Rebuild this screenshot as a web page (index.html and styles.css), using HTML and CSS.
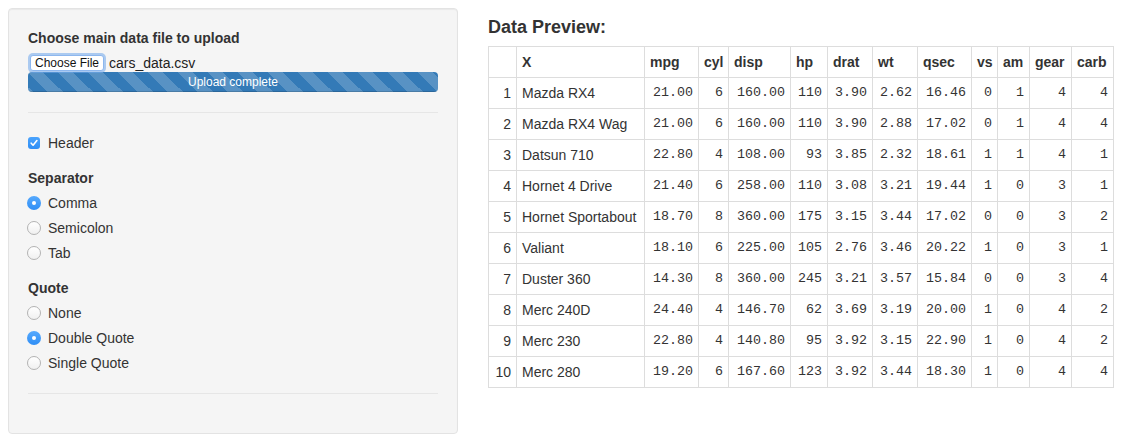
FILE: index.html
```html
<!DOCTYPE html>
<html>
<head>
<meta charset="utf-8">
<link rel="stylesheet" href="styles.css">
</head>
<body>
<div class="layout">
  <aside class="well">
    <div class="form-group">
      <div class="control-label">Choose main data file to upload</div>
      <div class="file-row">
        <span class="file-btn">Choose File</span>
        <span class="file-name">cars_data.csv</span>
      </div>
      <div class="progress"><div class="progress-bar">Upload complete</div></div>
    </div>
    <hr class="rule">
    <div class="form-group">
      <div class="check-row">
        <span class="checkbox-box"><svg width="12" height="12" viewBox="0 0 12 12"><path d="M3.2 6.2 L5.1 8.2 L8.9 3.6" fill="none" stroke="#fff" stroke-width="1.6" stroke-linecap="round" stroke-linejoin="round"/></svg></span>
        <span>Header</span>
      </div>
    </div>
    <div class="form-group">
      <div class="control-label">Separator</div>
      <div class="radio-list">
        <div class="radio-row"><span class="radio-dot on"></span><span>Comma</span></div>
        <div class="radio-row"><span class="radio-dot"></span><span>Semicolon</span></div>
        <div class="radio-row"><span class="radio-dot"></span><span>Tab</span></div>
      </div>
    </div>
    <div class="form-group">
      <div class="control-label">Quote</div>
      <div class="radio-list">
        <div class="radio-row"><span class="radio-dot"></span><span>None</span></div>
        <div class="radio-row"><span class="radio-dot on"></span><span>Double Quote</span></div>
        <div class="radio-row"><span class="radio-dot"></span><span>Single Quote</span></div>
      </div>
    </div>
    <hr class="rule">
  </aside>
  <main class="main">
    <h4 class="title">Data Preview:</h4>
    <table class="data-table">
      <colgroup>
        <col class="w28"><col class="w128"><col class="w54"><col class="w30"><col class="w62"><col class="w37"><col class="w45"><col class="w45"><col class="w54"><col class="w26"><col class="w32"><col class="w42"><col class="w42">
      </colgroup>
      <thead>
        <tr><th></th><th>X</th><th>mpg</th><th>cyl</th><th>disp</th><th>hp</th><th>drat</th><th>wt</th><th>qsec</th><th>vs</th><th>am</th><th>gear</th><th>carb</th></tr>
      </thead>
      <tbody>
        <tr><td class="idx">1</td><td>Mazda RX4</td><td class="n">21.00</td><td class="n">6</td><td class="n">160.00</td><td class="n">110</td><td class="n">3.90</td><td class="n">2.62</td><td class="n">16.46</td><td class="n">0</td><td class="n">1</td><td class="n">4</td><td class="n">4</td></tr>
        <tr><td class="idx">2</td><td>Mazda RX4 Wag</td><td class="n">21.00</td><td class="n">6</td><td class="n">160.00</td><td class="n">110</td><td class="n">3.90</td><td class="n">2.88</td><td class="n">17.02</td><td class="n">0</td><td class="n">1</td><td class="n">4</td><td class="n">4</td></tr>
        <tr><td class="idx">3</td><td>Datsun 710</td><td class="n">22.80</td><td class="n">4</td><td class="n">108.00</td><td class="n">93</td><td class="n">3.85</td><td class="n">2.32</td><td class="n">18.61</td><td class="n">1</td><td class="n">1</td><td class="n">4</td><td class="n">1</td></tr>
        <tr><td class="idx">4</td><td>Hornet 4 Drive</td><td class="n">21.40</td><td class="n">6</td><td class="n">258.00</td><td class="n">110</td><td class="n">3.08</td><td class="n">3.21</td><td class="n">19.44</td><td class="n">1</td><td class="n">0</td><td class="n">3</td><td class="n">1</td></tr>
        <tr><td class="idx">5</td><td>Hornet Sportabout</td><td class="n">18.70</td><td class="n">8</td><td class="n">360.00</td><td class="n">175</td><td class="n">3.15</td><td class="n">3.44</td><td class="n">17.02</td><td class="n">0</td><td class="n">0</td><td class="n">3</td><td class="n">2</td></tr>
        <tr><td class="idx">6</td><td>Valiant</td><td class="n">18.10</td><td class="n">6</td><td class="n">225.00</td><td class="n">105</td><td class="n">2.76</td><td class="n">3.46</td><td class="n">20.22</td><td class="n">1</td><td class="n">0</td><td class="n">3</td><td class="n">1</td></tr>
        <tr><td class="idx">7</td><td>Duster 360</td><td class="n">14.30</td><td class="n">8</td><td class="n">360.00</td><td class="n">245</td><td class="n">3.21</td><td class="n">3.57</td><td class="n">15.84</td><td class="n">0</td><td class="n">0</td><td class="n">3</td><td class="n">4</td></tr>
        <tr><td class="idx">8</td><td>Merc 240D</td><td class="n">24.40</td><td class="n">4</td><td class="n">146.70</td><td class="n">62</td><td class="n">3.69</td><td class="n">3.19</td><td class="n">20.00</td><td class="n">1</td><td class="n">0</td><td class="n">4</td><td class="n">2</td></tr>
        <tr><td class="idx">9</td><td>Merc 230</td><td class="n">22.80</td><td class="n">4</td><td class="n">140.80</td><td class="n">95</td><td class="n">3.92</td><td class="n">3.15</td><td class="n">22.90</td><td class="n">1</td><td class="n">0</td><td class="n">4</td><td class="n">2</td></tr>
        <tr><td class="idx">10</td><td>Merc 280</td><td class="n">19.20</td><td class="n">6</td><td class="n">167.60</td><td class="n">123</td><td class="n">3.92</td><td class="n">3.44</td><td class="n">18.30</td><td class="n">1</td><td class="n">0</td><td class="n">4</td><td class="n">4</td></tr>
      </tbody>
    </table>
  </main>
</div>
</body>
</html>
```

FILE: styles.css
```css
html, body {
  background: #fff;
}
body {
  margin: 8px;
  font-family: "Liberation Sans", Arial, sans-serif;
  font-size: 14px;
  line-height: 20px;
  color: #333;
}
.layout {
  display: flex;
  align-items: flex-start;
  gap: 30px;
}
.well {
  width: 450px;
  box-sizing: border-box;
  background: #f5f5f5;
  border: 1px solid #e3e3e3;
  border-radius: 4px;
  box-shadow: inset 0 1px 1px rgba(0,0,0,.05);
  padding: 19px;
}
.form-group {
  margin-bottom: 15px;
}
.control-label {
  font-weight: bold;
  margin-bottom: 5px;
}
.file-row {
  display: flex;
  align-items: center;
  height: 19px;
}
.file-btn {
  box-sizing: border-box;
  height: 16px;
  width: 74px;
  margin-left: 2px;
  border: 1px solid #8db7ee;
  border-radius: 3px;
  background: #fff;
  box-shadow: 0 0 0 2px rgba(110,165,235,.55);
  font-size: 12px;
  line-height: 14px;
  text-align: center;
  color: #111;
}
.file-name {
  margin-left: 5px;
  color: #222;
}
.progress {
  height: 20px;
  border-radius: 4px;
  overflow: hidden;
  background: #f5f5f5;
  margin-top: 0;
}
.progress-bar {
  height: 20px;
  background-color: #337ab7;
  background-image: linear-gradient(45deg, rgba(255,255,255,.18) 25%, transparent 25%, transparent 50%, rgba(255,255,255,.18) 50%, rgba(255,255,255,.18) 75%, transparent 75%, transparent);
  background-size: 30px 30px;
  color: #fff;
  font-size: 12px;
  line-height: 20px;
  text-align: center;
  box-shadow: inset 0 -1px 0 rgba(0,0,0,.15);
}
.rule {
  border: 0;
  border-top: 1px solid #e6e6e6;
  margin: 20px 0;
  height: 0;
}
.check-row, .radio-row {
  display: flex;
  align-items: center;
  height: 20px;
}
.checkbox-box {
  width: 12px;
  height: 12px;
  border-radius: 3px;
  background: linear-gradient(#4aa3fd, #2f8ef5);
  display: flex;
  margin-right: 8px;
}
.radio-list {
  display: flex;
  flex-direction: column;
  gap: 5px;
}
.radio-dot {
  box-sizing: border-box;
  width: 14px;
  height: 14px;
  border-radius: 50%;
  margin-left: -1px;
  margin-right: 7px;
  border: 1px solid #b3b3b3;
  background: linear-gradient(#fff, #f0f0f0);
  position: relative;
}
.radio-dot.on {
  border: 0;
  background: linear-gradient(#56a9fd, #2f8ef5);
}
.radio-dot.on::after {
  content: "";
  position: absolute;
  left: 5px;
  top: 5px;
  width: 4px;
  height: 4px;
  border-radius: 50%;
  background: #fff;
}
.main {
  flex: none;
}
.title {
  font-size: 18px;
  line-height: 20px;
  font-weight: bold;
  margin: 9px 0 9px;
  color: #333;
}
.data-table {
  border-collapse: collapse;
  table-layout: fixed;
  width: 625px;
  background: #fff;
}
.data-table th, .data-table td {
  border: 1px solid #ddd;
  padding: 5px;
  line-height: 20px;
  white-space: nowrap;
  overflow: hidden;
}
.data-table th {
  text-align: left;
  font-weight: bold;
}
.data-table td.idx {
  text-align: right;
}
.data-table td.n {
  text-align: right;
  font-family: "Liberation Mono", "Courier New", monospace;
  font-size: 13.33px;
}
.w28 { width: 28px; }
.w128 { width: 128px; }
.w54 { width: 54px; }
.w30 { width: 30px; }
.w62 { width: 62px; }
.w37 { width: 37px; }
.w45 { width: 45px; }
.w26 { width: 26px; }
.w32 { width: 32px; }
.w42 { width: 42px; }
```
